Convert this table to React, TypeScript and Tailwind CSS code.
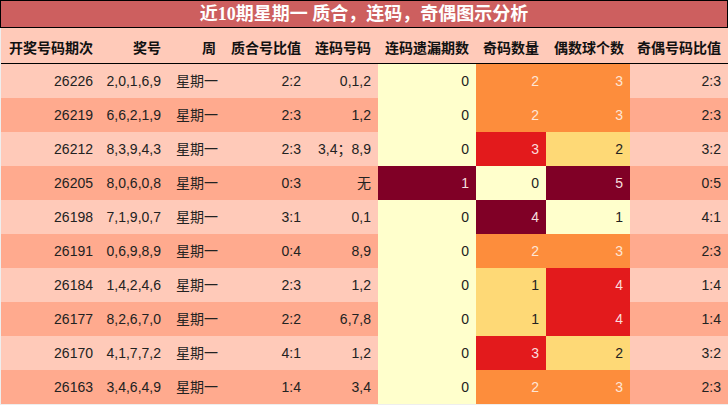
import React from "react";

type Row = {
  qi: string;
  nums: string;
  zh: string;
  lian: string;
  miss: number;
  odd: number;
  even: number;
  ratio: string;
};

const rows: Row[] = [
  { qi: "26226", nums: "2,0,1,6,9", zh: "2:2", lian: "0,1,2", miss: 0, odd: 2, even: 3, ratio: "2:3" },
  { qi: "26219", nums: "6,6,2,1,9", zh: "2:3", lian: "1,2", miss: 0, odd: 2, even: 3, ratio: "2:3" },
  { qi: "26212", nums: "8,3,9,4,3", zh: "2:3", lian: "3,4；8,9", miss: 0, odd: 3, even: 2, ratio: "3:2" },
  { qi: "26205", nums: "8,0,6,0,8", zh: "0:3", lian: "无", miss: 1, odd: 0, even: 5, ratio: "0:5" },
  { qi: "26198", nums: "7,1,9,0,7", zh: "3:1", lian: "0,1", miss: 0, odd: 4, even: 1, ratio: "4:1" },
  { qi: "26191", nums: "0,6,9,8,9", zh: "0:4", lian: "8,9", miss: 0, odd: 2, even: 3, ratio: "2:3" },
  { qi: "26184", nums: "1,4,2,4,6", zh: "2:3", lian: "1,2", miss: 0, odd: 1, even: 4, ratio: "1:4" },
  { qi: "26177", nums: "8,2,6,7,0", zh: "2:2", lian: "6,7,8", miss: 0, odd: 1, even: 4, ratio: "1:4" },
  { qi: "26170", nums: "4,1,7,7,2", zh: "4:1", lian: "1,2", miss: 0, odd: 3, even: 2, ratio: "3:2" },
  { qi: "26163", nums: "3,4,6,4,9", zh: "1:4", lian: "3,4", miss: 0, odd: 2, even: 3, ratio: "2:3" },
];

const missCls: Record<number, string> = {
  0: "bg-[#ffffcc] text-[#222]",
  1: "bg-[#800026] text-[#f6dede]",
};
const oddCls: Record<number, string> = {
  0: "bg-[#ffffcc] text-[#222]",
  1: "bg-[#fed976] text-[#222]",
  2: "bg-[#fd8d3c] text-[#fde6d6]",
  3: "bg-[#e31a1c] text-[#fbdcdc]",
  4: "bg-[#800026] text-[#f6dede]",
};
const evenCls: Record<number, string> = {
  1: "bg-[#ffffcc] text-[#222]",
  2: "bg-[#fed976] text-[#222]",
  3: "bg-[#fd8d3c] text-[#fde6d6]",
  4: "bg-[#e31a1c] text-[#fbdcdc]",
  5: "bg-[#800026] text-[#f6dede]",
};

const grid = "grid grid-cols-[99px_68px_55px_85px_70px_98px_70px_84px_98px]";
const cjk = "font-['Liberation_Sans','Noto_Sans_CJK_SC',sans-serif]";

export default function App() {
  return (
    <div className={`w-[728px] h-[405px] bg-[#eeeeee] overflow-hidden ${cjk}`}>
      <div className="h-[28px] border border-black bg-[#cd5f5f] flex items-center justify-center">
        <span className="text-white font-bold text-[18px] leading-none font-['Liberation_Serif','Noto_Sans_CJK_SC',serif]">
          近10期星期一 质合，连码，奇偶图示分析
        </span>
      </div>
      <div className="pl-[1px]">
        <div className={`${grid} h-[35px] bg-[#ffcab9] text-[14px] font-bold text-[#111] items-center pt-[3px]`}>
          <div className="text-right pr-[7px] font-['Noto_Sans_CJK_SC',sans-serif]">开奖号码期次</div>
          <div className="text-right pr-[7px] font-['Noto_Sans_CJK_SC',sans-serif]">奖号</div>
          <div className="text-right pr-[7px] font-['Noto_Sans_CJK_SC',sans-serif]">周</div>
          <div className="text-right pr-[7px] font-['Noto_Sans_CJK_SC',sans-serif]">质合号比值</div>
          <div className="text-right pr-[7px] font-['Noto_Sans_CJK_SC',sans-serif]">连码号码</div>
          <div className="text-right pr-[7px] font-['Noto_Sans_CJK_SC',sans-serif]">连码遗漏期数</div>
          <div className="text-right pr-[7px] font-['Noto_Sans_CJK_SC',sans-serif]">奇码数量</div>
          <div className="text-right pr-[6px] font-['Noto_Sans_CJK_SC',sans-serif]">偶数球个数</div>
          <div className="text-right pr-[7px] font-['Noto_Sans_CJK_SC',sans-serif]">奇偶号码比值</div>
        </div>
        <div className="h-[1px] bg-black" />
        {rows.map((r, i) => {
          const rowBg = i % 2 === 0 ? "bg-[#ffcab9]" : "bg-[#ffaa8e]";
          return (
            <div key={r.qi} className={`${grid} h-[34px] text-[14px] text-[#222] ${rowBg}`}>
              <div className="flex items-center justify-end pr-[7px]">{r.qi}</div>
              <div className="flex items-center justify-end pr-[7px]">{r.nums}</div>
              <div className="flex items-center justify-start pl-[8px]">星期一</div>
              <div className="flex items-center justify-end pr-[7px]">{r.zh}</div>
              <div className="flex items-center justify-end pr-[7px]">{r.lian}</div>
              <div className={`flex items-center justify-end pr-[7px] ${missCls[r.miss]}`}>{r.miss}</div>
              <div className={`flex items-center justify-end pr-[7px] ${oddCls[r.odd]}`}>{r.odd}</div>
              <div className={`flex items-center justify-end pr-[7px] ${evenCls[r.even]}`}>{r.even}</div>
              <div className="flex items-center justify-end pr-[7px]">{r.ratio}</div>
            </div>
          );
        })}
      </div>
    </div>
  );
}
